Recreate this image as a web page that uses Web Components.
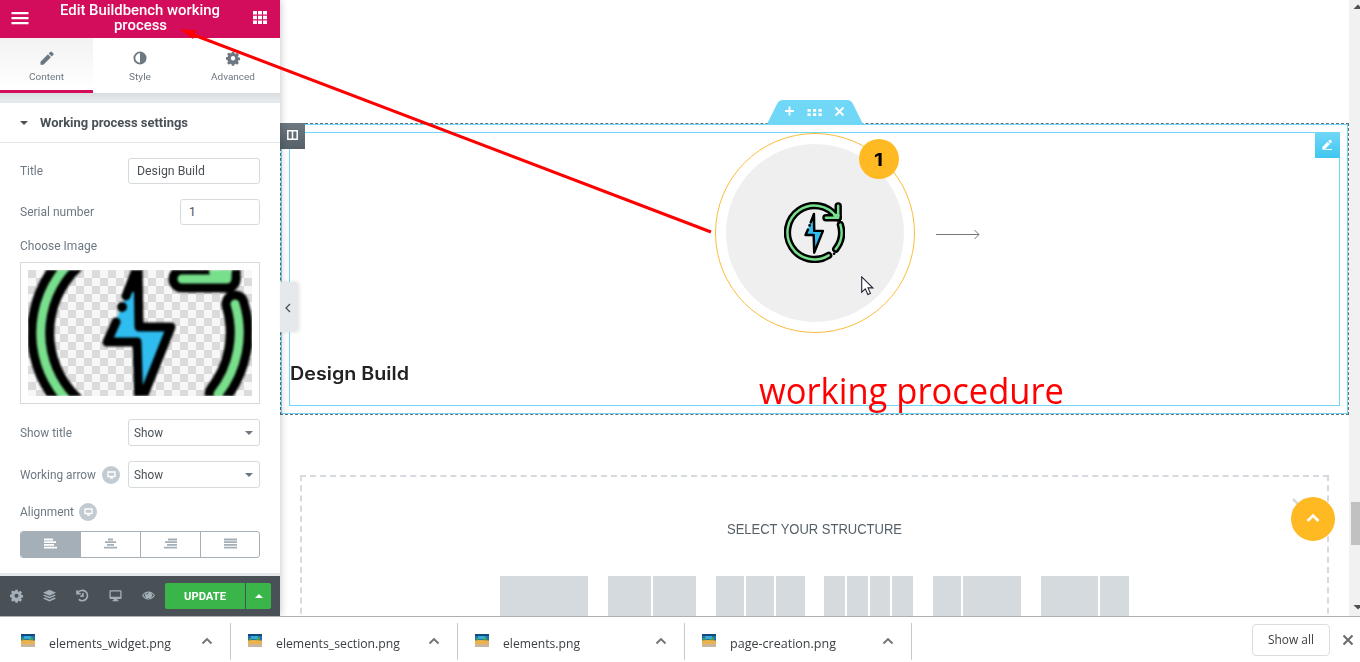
<!DOCTYPE html>
<html lang="en">
<head>
<meta charset="utf-8">
<title>Elementor</title>
<style>
html,body{margin:0;padding:0;height:662px;overflow:hidden;background:#fff;font-family:Roboto,"Liberation Sans",sans-serif}
</style>
</head>
<body>
<editor-app></editor-app>
<script>
const define = (name, html, after) => {
  const t = document.createElement('template');
  t.innerHTML = html;
  customElements.define(name, class extends HTMLElement {
    constructor() {
      super();
      this.attachShadow({mode: 'open'}).appendChild(t.content.cloneNode(true));
    }
    connectedCallback() { if (after) after.call(this, this.shadowRoot); }
  });
};

/* One line of text scaled horizontally to the width given by w */
define('fit-text', `<style>:host{display:block;white-space:nowrap;flex:none}span{display:inline-block;transform-origin:0 50%}</style><span><slot></slot></span>`,
function(r) {
  const s = r.querySelector('span'), w = +this.getAttribute('w');
  this.style.width = w + 'px';
  const natural = s.offsetWidth ? s.getBoundingClientRect().width : 0;
  if (natural) s.style.transform = `scaleX(${w / natural})`;
});

define('energy-icon', `<style>:host{display:block}svg{display:block;width:100%;height:100%}</style>
<svg viewBox="0 0 224 224" preserveAspectRatio="xMidYMid slice" fill="none" stroke-linecap="round" stroke-linejoin="round">
<g stroke="#000" stroke-width="27">
<path d="M207 83A99 99 0 0 1 190 173M164 196A99 99 0 1 1 192 54"/><path d="M199 14V58H154"/><path d="M176 40L199 58"/></g>
<g stroke="#78df8c" stroke-width="9"><path d="M207 83A99 99 0 0 1 190 173M164 196A99 99 0 1 1 192 54"/><path d="M199 14V58H154"/><path d="M188 50H197" stroke-width="14"/></g>
<circle cx="184" cy="190" r="5" fill="#000"/>
<path d="M110 46L111 106H143L111 184L109 121H79Z" fill="#2fbcee"/>
<path d="M98 75L110 44L111 106H143L111 186L109 121H79L88 101" stroke="#000" stroke-width="9"/>
<path d="M110 46L101 71H110Z" fill="#000"/>
<circle cx="94" cy="86" r="5" fill="#000"/>
</svg>`);

const tabIcons = {
 pencil:'<path d="M.5 11.500L8.500 3.500l3.200 3.200-8 8H.5zM9.300 2.700L11 1q.9-.8 1.700 0l1.500 1.500q.8.900 0 1.700L12.500 5.900z"/>',
 contrast:'<path fill-rule="evenodd" d="M7.5.5a7 7 0 1 0 0 14a7 7 0 0 0 0-14zM7.5 2.5v10a5 5 0 0 1 0-10z"/>',
 gear:'<path fill-rule="evenodd" d="M6.2.8h2.6l.4 2 1 .4L12 2l1.9 1.9-1.2 1.8.4 1 2 .4v2.6l-2 .4-.4 1 1.1 1.7-1.9 1.9-1.7-1.1-1 .4-.4 1.9H6.200l-.4-1.900-1-.4-1.700 1.100-1.900-1.900 1.100-1.700-.4-1L0 9.200V6.600l1.900-.4.4-1-1.100-1.700L3.100 1.600l1.700 1.100 1-.4zM7.500 5.400a2.300 2.300 0 1 0 0 4.700a2.300 2.300 0 0 0 0-4.700z"/>',
 layers:'<path d="M7.500.800L15 4.300 7.500 7.700 0 4.300zM2 6.600L7.500 9 13 6.600 15 7.600 7.500 11 0 7.600zM2 9.900l5.500 2.400L13 9.900l2 1-7.500 3.400L0 10.900z"/>',
 history:'<path d="M2.300 4.200A6 6 0 1 1 3.200 12M1.200 1.300V5.500H5.500M8 4.500V8.300H5" fill="none" stroke="currentColor" stroke-width="1.900"/>',
 monitor:'<path fill-rule="evenodd" d="M1.500 1.500h12q1 0 1 1v8q0 1-1 1H9.500l.5 1.500h1v1.200H4V13h1l.5-1.500h-4q-1 0-1-1v-8q0-1 1-1zM2 3v6h11V3z"/>',
 eye:'<path fill-rule="evenodd" d="M0 7.500Q3 2.800 7.500 2.800T15 7.500Q12 12 7.500 12T0 7.500zM1.500 7.500Q4 10.800 7.500 10.800T13.500 7.500Q12.300 5.500 10.600 4.700A4 4 0 1 1 4.400 4.700Q2.700 5.500 1.500 7.500zM7.500 4A2.600 2.600 0 0 0 5 6.600h1A1.600 1.600 0 0 1 7.500 5z"/>'
};
define('ui-icon', `<style>:host{display:block;width:14px;height:14px;flex:none}svg{display:block;width:100%;height:100%;overflow:visible}</style><svg viewBox="0 0 15 15" fill="currentColor"></svg>`,
function(r){ r.querySelector('svg').innerHTML = tabIcons[this.getAttribute('name')]; });

define('panel-header', `<style>
:host{display:grid;grid-template-columns:40px 1fr 40px;height:38px;background:#d30c5c;color:#fff;align-items:center;overflow:hidden}
svg{display:block;margin:-3px auto 0}.t{display:flex;flex-direction:column;align-items:center;font-size:14px;line-height:15px;font-weight:500;margin-top:-3px}
</style><svg width="18" height="14" fill="#fff"><path d="M.5 1h17v2.300H.5zM.5 6h17v2.300H.5zM.5 11h17v2.300H.5z"/></svg>
<div class="t"><fit-text w="160">Edit Buildbench working</fit-text><fit-text w="53">process</fit-text></div>
<svg width="14" height="13" fill="#fff"><path d="M0 0h4v3.500H0zM5 0h4v3.500H5zM10 0h4v3.500h-4zM0 4.700h4v3.500H0zM5 4.700h4v3.500H5zM10 4.700h4v3.500h-4zM0 9.500h4V13H0zM5 9.500h4V13H5zM10 9.500h4V13h-4z"/></svg>`);

define('panel-tab', `<style>
:host{display:flex;flex:1;box-sizing:border-box;flex-direction:column;align-items:center;padding-top:13px;gap:5px;color:#6d7882;font-size:9.500px;line-height:13px;border-bottom:3px solid transparent}
:host([active]){background:linear-gradient(#f2f2f2,#fff);border-color:#d30c5c}
</style><slot name="icon"></slot><slot></slot>`);

define('panel-row', `<style>
:host{display:flex;justify-content:space-between;align-items:center;color:#6d7882;font-size:12px}
.l{display:flex;align-items:center;gap:6px}</style><div class="l"><slot name="label"></slot></div><slot></slot>`);

define('text-field', `<style>
:host{display:flex;align-items:center;box-sizing:border-box;border:1px solid #d5dadf;border-radius:3px;padding:0 8px;color:#495157;font-size:12px;background:#fff}
</style><slot></slot>`);

define('select-field', `<style>
:host{display:flex;align-items:center;justify-content:space-between;box-sizing:border-box;width:132px;height:27px;border:1px solid #d5dadf;border-radius:3px;padding:0 6px 0 5px;color:#495157;font-size:12px;background:#fff}
i{border:4px solid transparent;border-top-color:#6d7882;border-bottom:0}
</style><slot></slot><i></i>`);

define('device-badge', `<style>:host{display:grid;place-items:center;width:18px;height:18px;border-radius:50%;background:#c2cbd2;flex:none}svg{display:block}</style>
<svg width="9" height="8"><path d="M1 1h7v4.500H1z" fill="none" stroke="#fff" stroke-width="1.400"/><path d="M3 7h3" stroke="#fff" stroke-width="1.500"/></svg>`);

define('align-buttons', `<style>
:host{display:grid;grid-template-columns:59px 60px 60px 59px;box-sizing:border-box;height:27px;border:1px solid #a4afb7;border-radius:3px;overflow:hidden;color:#a4afb7}
div{display:grid;place-items:center;border-left:1px solid #a4afb7;padding-bottom:3px}div:first-of-type{background:#a4afb7;color:#fff;border:0}
svg{display:block}
</style>
<div><svg width="13" height="11" stroke="currentColor" stroke-width="1.800"><path d="M0 1.500H9M0 4.200H12M0 6.900H10M0 9.600H13"/></svg></div>
<div><svg width="13" height="11" stroke="currentColor" stroke-width="1.800"><path d="M4 1.500H9M1 4.200H12M3 6.900H10M0 9.600H13"/></svg></div>
<div><svg width="13" height="11" stroke="currentColor" stroke-width="1.800"><path d="M4 1.500H13M1 4.200H13M3 6.900H13M0 9.600H13"/></svg></div>
<div><svg width="13" height="11" stroke="currentColor" stroke-width="1.800"><path d="M0 1.500H13M0 4.200H13M0 6.900H13M0 9.600H13"/></svg></div>`);

define('media-preview', `<style>
:host{display:block;box-sizing:border-box;height:142px;border:1px solid #d5dadf;padding:7px}
div{height:126px;overflow:hidden;background:repeating-conic-gradient(#f7f7f7 0 25%,#dbdbdb 0 50%) 0 0/16px 16px}
energy-icon{height:126px;filter:blur(.9px)}
</style><div><energy-icon></energy-icon></div>`);

define('panel-footer', `<style>
:host{display:flex;align-items:center;height:40px;background:#495157;color:#a4afb7;box-sizing:border-box;padding-right:9px}
.i{display:flex;flex:1;align-items:center;padding:0 0 1px 10px;gap:20px}ui-icon{width:13px;height:13px}
.b{display:grid;grid-template-columns:80px 25px;gap:1px;height:26px;color:#fff}
.b>*{background:#39b54a;display:grid;place-items:center;border-radius:2px 0 0 2px}.b>:last-child{border-radius:0 2px 2px 0}
.b{font-size:11.500px;font-weight:700}i{border:4px solid transparent;border-bottom-color:#fff;border-top:0}
</style><div class="i"><ui-icon name="gear"></ui-icon><ui-icon name="layers"></ui-icon><ui-icon name="history"></ui-icon><ui-icon name="monitor"></ui-icon><ui-icon name="eye"></ui-icon></div>
<div class="b"><div><fit-text w="42">UPDATE</fit-text></div><div><i></i></div></div>`);

define('editor-panel', `<style>
:host{display:flex;flex-direction:column;width:280px;height:616px;background:#fff;box-shadow:0 0 8px rgba(0,0,0,.25);position:relative;z-index:2}
.tabs{display:flex;height:55px}.gap{height:10px;background:linear-gradient(#d9dde0,#e6e9ec 70%)}
.h{display:flex;align-items:center;height:39px;border-bottom:1px solid #e6e9ec;padding-left:20px;gap:12px;font-size:13px;font-weight:700;color:#495157}
.h i{border:4px solid transparent;border-top-color:#495157;border-bottom:0}
.c{flex:1;padding:15px 20px 0;border-bottom:3px solid #e6e9ec}
.toggle{position:absolute;left:280px;top:282px;width:17px;height:50px;background:#e6e9ec;border-radius:0 3px 3px 0;display:grid;place-items:center;box-shadow:2px 0 4px rgba(0,0,0,.12)}
.toggle svg{margin:2px 2px 0 0}
</style>
<panel-header></panel-header>
<div class="tabs"><panel-tab active><ui-icon slot="icon" name="pencil"></ui-icon><fit-text w="35">Content</fit-text></panel-tab><panel-tab><ui-icon slot="icon" name="contrast"></ui-icon><fit-text w="22">Style</fit-text></panel-tab><panel-tab><ui-icon slot="icon" name="gear"></ui-icon><fit-text w="44">Advanced</fit-text></panel-tab></div>
<div class="gap"></div>
<div class="h"><i></i><fit-text w="148">Working process settings</fit-text></div>
<div class="c">
<panel-row><fit-text slot="label" w="23">Title</fit-text><text-field style="width:132px;height:26px"><fit-text w="68">Design Build</fit-text></text-field></panel-row>
<panel-row style="margin-top:15px"><fit-text slot="label" w="74">Serial number</fit-text><text-field style="width:80px;height:26px">1</text-field></panel-row>
<panel-row style="height:37px;padding-top:1px;box-sizing:border-box;margin-top:1px"><fit-text slot="label" w="77" style="margin-top:1px">Choose Image</fit-text></panel-row>
<media-preview style="margin-top:-1px"></media-preview>
<panel-row style="margin-top:15px"><fit-text slot="label" w="52">Show title</fit-text><select-field><fit-text w="29">Show</fit-text></select-field></panel-row>
<panel-row style="margin-top:15px"><fit-text slot="label" w="76">Working arrow</fit-text><device-badge slot="label"></device-badge><select-field><fit-text w="29">Show</fit-text></select-field></panel-row>
<panel-row style="margin-top:15px;height:18px"><fit-text slot="label" w="54">Alignment</fit-text><device-badge slot="label" style="margin-left:-1px"></device-badge></panel-row>
<align-buttons style="margin-top:10px"></align-buttons>
</div>
<panel-footer></panel-footer>
<div class="toggle"><svg width="6" height="10" fill="none" stroke="#495157" stroke-width="1.300"><path d="M5 1L1 5L5 9"/></svg></div>`);

define('process-widget', `<style>
:host{display:flex;flex-direction:column;position:relative;font-family:Inter,"Liberation Sans",sans-serif;color:#222}
.ring{position:relative;align-self:center;box-sizing:border-box;width:200px;height:200px;border:1px solid #fbbd3a;border-radius:50%;padding:10px}
.disc{display:grid;place-items:center;height:178px;background:#efefef;border-radius:50%}
energy-icon{width:61px;height:61px;margin:-2px 1px 0 0}
.n{position:absolute;left:143px;top:5px;width:40px;height:40px;border-radius:50%;background:#ffb922;display:grid;place-items:center;font-size:18px;font-weight:700;color:#000}
.n fit-text{margin-right:1px}
.arrow{position:absolute;left:220px;top:95px}
.title{margin:31px 0 0 0;font-size:18px;line-height:20px;font-weight:600}
</style><div class="ring"><div class="disc"><energy-icon></energy-icon></div><div class="n"><fit-text w="9">1</fit-text></div>
<svg class="arrow" width="46" height="12" fill="none" stroke="#777"><path d="M0 5.500H43M38.500 1L43 5.500L38.500 10"/></svg></div>
<div class="title"><fit-text w="119">Design Build</fit-text></div>`);

define('page-section', `<style>
:host{display:block;position:relative;box-sizing:border-box;height:292px;border:1px dashed #64707a}
.s{box-sizing:border-box;height:290px;border:1px solid #71d7f7;padding:7px}
.c{box-sizing:border-box;height:274px;border:1px solid #71d7f7}
.tab{position:absolute;left:486px;top:-24px}
.col{position:absolute;left:-1px;top:-1px;width:25px;height:26px;background:linear-gradient(#6d7882,#556068);display:grid;place-items:center}
.col svg{margin-top:-2px}
.edit{position:absolute;right:8px;top:8px;width:25px;height:26px;background:linear-gradient(#71d7f7,#3fc7f0);display:grid;place-items:center}
.edit svg{margin:-1px 1px 0 0}
</style><div class="s"><div class="c"><process-widget></process-widget></div></div>
<svg class="tab" width="96" height="24"><path d="M0 24L10 4Q12 0 16 0H80Q84 0 86 4L96 24Z" fill="#71d7f7"/><path d="M18 11H27M22.500 6.500V15.500M68.500 7.500L76.500 15.500M76.500 7.500L68.500 15.500" stroke="#fff" stroke-width="1.800"/><path d="M40.500 9h3.200v2.800h-3.200zM46 9h3.200v2.800H46zM51.500 9h3.200v2.800h-3.200zM40.500 13.300h3.200v2.800h-3.200zM46 13.300h3.200v2.800H46zM51.500 13.300h3.200v2.800h-3.200z" fill="#fff"/></svg>
<div class="col"><svg width="11" height="10" fill="none" stroke="#fff" stroke-width="1.500"><path d="M.8.800H10.200V9.200H.8zM5.500 1V9"/></svg></div>
<div class="edit"><svg width="12" height="12" fill="#fff"><path d="M1 10.500L1.500 7.700 6.500 2.700 9 5 4 10zM7.200 2L8.300.9Q9 .400 9.700 1l.9 1q.6.700 0 1.300L9.600 4.400zM5.500 10H11v1H1z"/></svg></div>`);

define('layout-preset', `<style>:host{display:grid;gap:2px;width:88.300px;height:40px}</style>`, function(r){
  const c = this.getAttribute('cols').split(' ');
  this.style.gridTemplateColumns = c.map(n => n + 'fr').join(' ');
  c.forEach(() => { const d = document.createElement('div'); d.style.background = '#d5dadf'; r.appendChild(d); });
});

define('structure-picker', `<style>
:host{display:flex;flex-direction:column;align-items:center;box-sizing:border-box;width:1029px;height:200px;border:2px dashed #d5dadf;color:#556068;font-family:"Liberation Sans",Arial,sans-serif;font-size:14px;line-height:16px;position:relative}
fit-text{margin-top:44px}.p{display:flex;gap:19.900px;margin-top:39px}
.x{position:absolute;right:21px;top:21px}
</style><fit-text w="175">SELECT YOUR STRUCTURE</fit-text>
<div class="p"><layout-preset cols="1"></layout-preset><layout-preset cols="1 1"></layout-preset><layout-preset cols="1 1 1"></layout-preset><layout-preset cols="1 1 1 1"></layout-preset><layout-preset cols="1 2"></layout-preset><layout-preset cols="2 1"></layout-preset></div>
<svg class="x" width="14" height="14" stroke="#d5dadf" stroke-width="2.500"><path d="M1 1L13 13M13 1L1 13"/></svg>`);

define('page-canvas', `<style>
:host{display:flex;flex-direction:column;flex:1;height:616px;overflow:hidden;position:relative;background:#fff}
page-section{margin-top:123px;flex:none}structure-picker{margin:60px 0 0 20px;flex:none}
.note{position:absolute;left:479px;top:367px;font:36px/48px "Open Sans","Noto Sans",sans-serif;color:#f00}
.up{position:absolute;left:1011px;top:497px;width:44px;height:44px;border-radius:50%;background:#ffb922;display:grid;place-items:center}
.up svg{margin-top:-2px}
.cur{position:absolute;left:581px;top:276px}
</style><page-section></page-section><structure-picker></structure-picker>
<div class="note"><fit-text w="305">working procedure</fit-text></div>
<div class="up"><svg width="14" height="10" fill="none" stroke="#fff" stroke-width="2.600"><path d="M1.500 8L7 2.500L12.500 8"/></svg></div>
<svg class="cur" width="13" height="20"><path d="M.7.900V16.200L4.300 12.900L6.800 18.500L9.400 17.400L7 11.900H11.800Z" fill="#fff" stroke="#222436" stroke-width="1.100"/></svg>`);

define('page-scrollbar', `<style>
:host{display:flex;flex-direction:column;justify-content:space-between;width:11px;height:616px;background:#f1f1f1;position:relative}
svg{display:block}.t{position:absolute;left:2px;top:502px;width:9px;height:43px;background:#c1c1c1}
</style><svg width="11" height="14" fill="#505050"><path d="M4.500 9L9 4.500L13.500 9z"/></svg><div class="t"></div><svg width="11" height="14" fill="#505050"><path d="M4.500 3L9 7.500L13.500 3z"/></svg>`);

define('download-item', `<style>
:host{display:flex;align-items:center;box-sizing:border-box;width:227px;height:37px;border-right:1px solid #c8c8c8;padding:1px 17px 0 17px;color:#3c4043}
.n{flex:1;font:13px/18px "Open Sans","Noto Sans",sans-serif;margin-left:14px;padding-top:1px}svg{display:block}.p{margin-top:-4px}.v{margin-top:-3px}
</style><svg class="p" width="14" height="13"><path fill="#1c70b4" d="M0 0h14v7H0z"/><path fill="#10497b" d="M0 0h14v2H0z"/><path fill="#35a9d8" d="M3 2h7v3H3z"/><path fill="#4b9846" d="M1 4h2l1 2h3l1-1h2V3h2v4H1z"/><path fill="#efb14b" d="M0 6.500l5-.5 9 .5V10H0z"/><path fill="#c9b79d" d="M0 10h14v3H0z"/></svg>
<div class="n"><slot></slot></div><svg class="v" width="12" height="8" fill="none" stroke="#737373" stroke-width="1.900"><path d="M1.500 6.500L6 2L10.500 6.500"/></svg>`);

define('download-shelf', `<style>
:host{display:flex;box-sizing:border-box;height:46px;border-top:1px solid #b0b0b0;background:#fff;padding:6px 6px 0 4px;position:relative;z-index:4}
.b{box-sizing:border-box;margin:1px 12px 0 auto;width:78px;height:32px;border:1px solid #dadce0;border-radius:4px;display:grid;place-items:center;font:500 12px/16px "Open Sans",sans-serif;color:#3c4043}
svg{margin-top:11px}
</style><download-item><fit-text w="122">elements_widget.png</fit-text></download-item><download-item><fit-text w="124">elements_section.png</fit-text></download-item><download-item><fit-text w="77">elements.png</fit-text></download-item><download-item><fit-text w="106">page-creation.png</fit-text></download-item>
<div class="b"><fit-text w="46">Show all</fit-text></div><svg width="12" height="12" stroke="#6a6a6a" stroke-width="2"><path d="M1.500 1.500L10.500 10.500M10.500 1.500L1.500 10.500"/></svg>`);

define('callout-arrow', `<style>:host{display:block;position:absolute;left:0;top:0;z-index:5;pointer-events:none}svg{display:block}</style>
<svg width="720" height="240"><path d="M190 33.500L711 232" stroke="#f00" stroke-width="3"/><path d="M180 29L196 30.500L193 39Z" fill="#f00"/></svg>`);

define('editor-app', `<style>
:host{display:flex;flex-direction:column;width:1360px;height:662px;overflow:hidden;position:relative}
.m{display:flex;height:616px}
</style><div class="m"><editor-panel></editor-panel><page-canvas></page-canvas><page-scrollbar></page-scrollbar></div>
<download-shelf></download-shelf><callout-arrow></callout-arrow>`);
</script>
</body>
</html>
